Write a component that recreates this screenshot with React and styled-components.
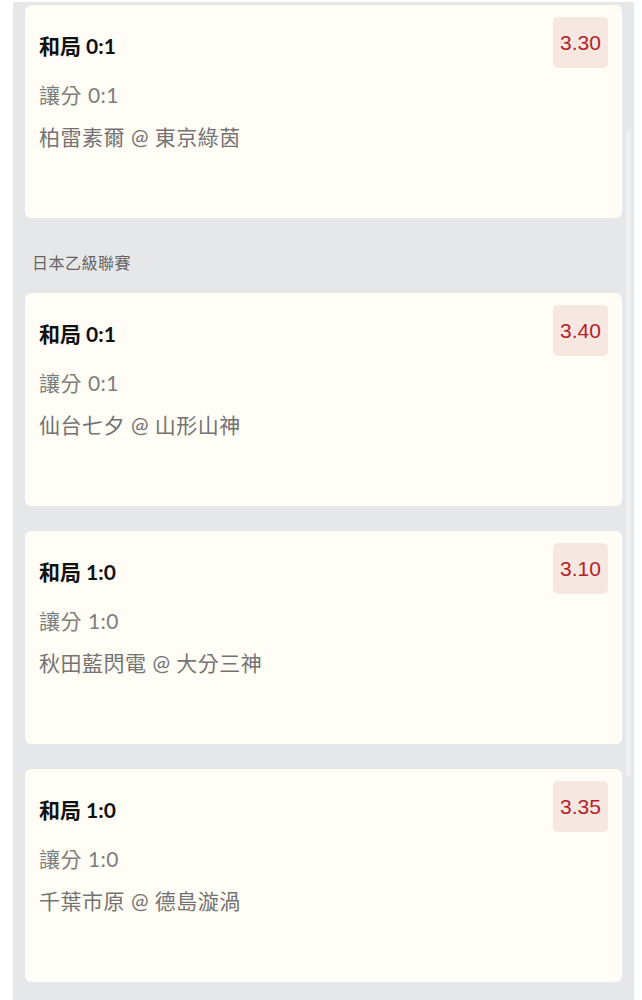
import React from "react";
import styled, { createGlobalStyle } from "styled-components";

const GlobalStyle = createGlobalStyle`
  body {
    margin: 0;
    background: #ffffff;
    font-family: Lato, "Noto Sans CJK TC", sans-serif;
  }
`;

const Panel = styled.div`
  position: relative;
  margin: 2px 8px 0 13px;
  padding: 3px 12px 20px 12px;
  background: #e6e7e9;
  display: flex;
  flex-direction: column;
`;

const ScrollThumb = styled.div`
  position: absolute;
  top: 128px;
  right: 3px;
  width: 5px;
  height: 647px;
  border-radius: 3px;
  background: #eff0f2;
`;

const Group = styled.section`
  display: flex;
  flex-direction: column;
  gap: 25px;
`;

const LeagueLabel = styled.div`
  margin: 35px 0 -5px 7px;
  font-size: 16px;
  line-height: 20px;
  letter-spacing: 0.5px;
  color: #666666;
`;

const Card = styled.div`
  height: 213px;
  box-sizing: border-box;
  padding: 12px 14px 0 14px;
  background: #fffdf5;
  border-radius: 6px;
  display: flex;
  flex-direction: column;
`;

const Header = styled.div`
  display: flex;
  justify-content: space-between;
  align-items: flex-start;
`;

const Title = styled.div`
  margin-top: 17px;
  font-size: 21px;
  line-height: 24px;
  font-weight: 700;
  color: #111111;
`;

const Odds = styled.div`
  width: 55px;
  height: 51px;
  border-radius: 5px;
  background: #f7e7e1;
  display: flex;
  align-items: center;
  justify-content: center;
  font-family: "Liberation Sans", Arial, sans-serif;
  font-size: 21px;
  color: #b2242a;
`;

const Handicap = styled.div`
  margin-top: 15px;
  font-size: 21px;
  line-height: 24px;
  letter-spacing: 0.5px;
  color: #7d7d7d;
`;

const Teams = styled.div`
  margin-top: 18px;
  font-size: 21px;
  line-height: 24px;
  letter-spacing: 0.5px;
  color: #737373;
`;

const groups = [
  {
    league: null,
    bets: [
      { title: "和局 0:1", handicap: "讓分 0:1", teams: "柏雷素爾 @ 東京綠茵", odds: "3.30" },
    ],
  },
  {
    league: "日本乙級聯賽",
    bets: [
      { title: "和局 0:1", handicap: "讓分 0:1", teams: "仙台七夕 @ 山形山神", odds: "3.40" },
      { title: "和局 1:0", handicap: "讓分 1:0", teams: "秋田藍閃電 @ 大分三神", odds: "3.10" },
      { title: "和局 1:0", handicap: "讓分 1:0", teams: "千葉市原 @ 德島漩渦", odds: "3.35" },
    ],
  },
];

const BetCard = ({ bet }) => (
  <Card>
    <Header>
      <Title>{bet.title}</Title>
      <Odds>{bet.odds}</Odds>
    </Header>
    <Handicap>{bet.handicap}</Handicap>
    <Teams>{bet.teams}</Teams>
  </Card>
);

const App = () => {
  return (
    <>
      <GlobalStyle />
      <Panel>
        {groups.map((group, i) => (
          <Group key={i}>
            {group.league && <LeagueLabel>{group.league}</LeagueLabel>}
            {group.bets.map((bet, j) => (
              <BetCard key={j} bet={bet} />
            ))}
          </Group>
        ))}
        <ScrollThumb />
      </Panel>
    </>
  );
};

export default App;
